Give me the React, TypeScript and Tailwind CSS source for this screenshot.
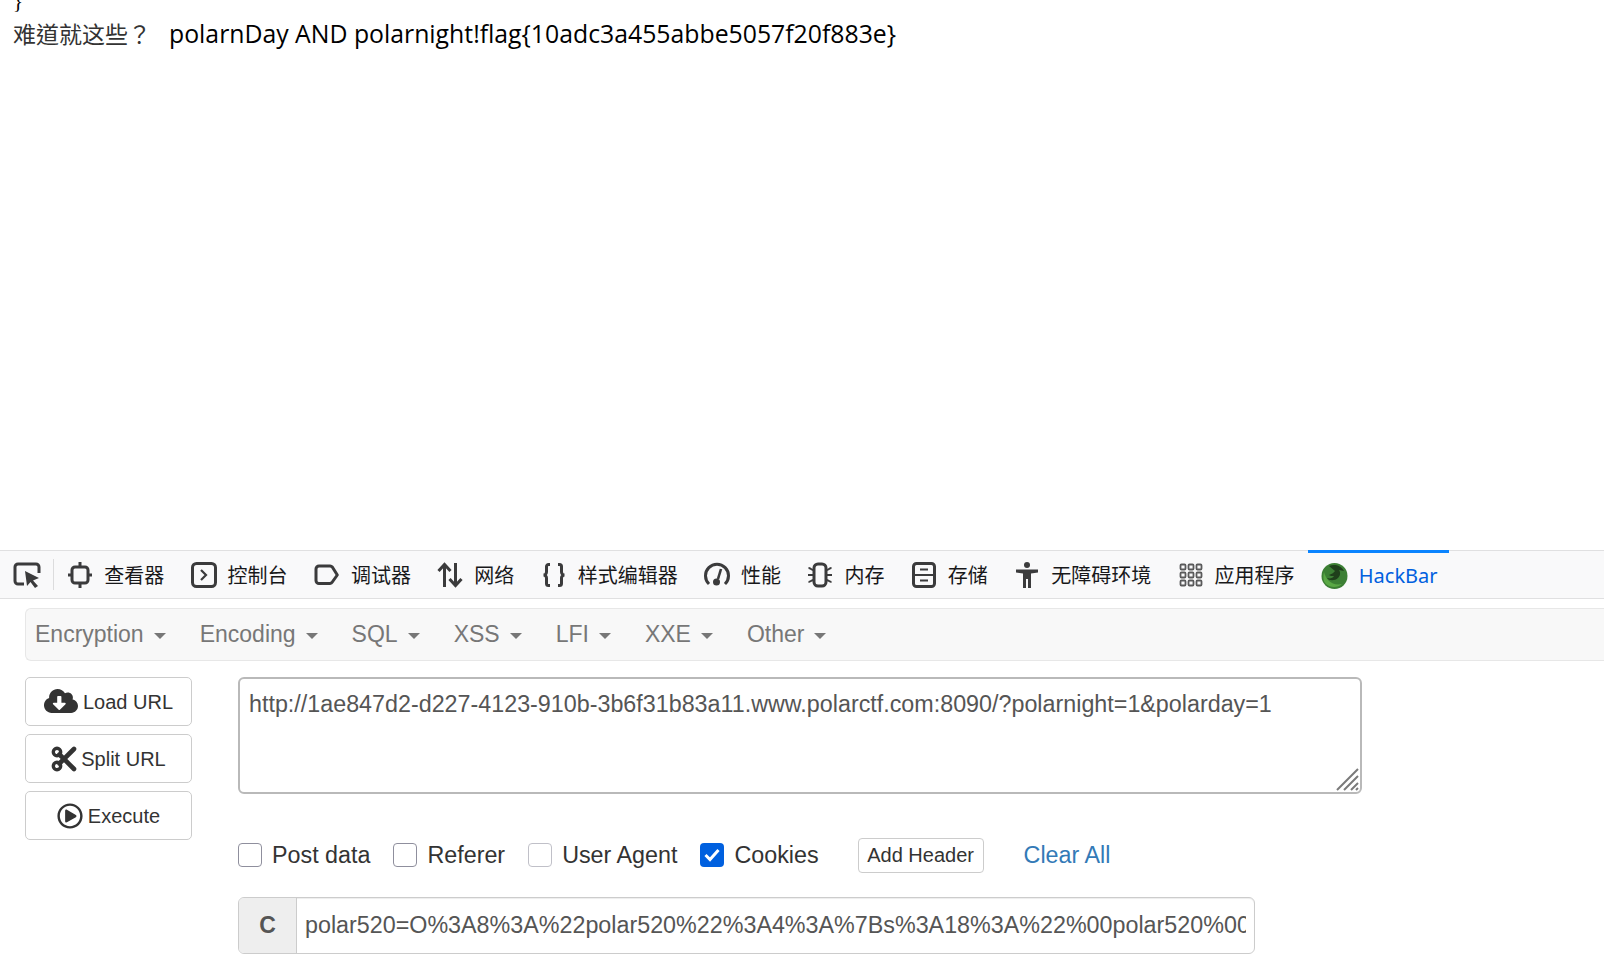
import { FaCloudDownloadAlt, FaRegPlayCircle } from "react-icons/fa";
import type { ReactNode } from "react";

const ic = "#3b3b3c";

const CursorIcon = () => (
  <svg width="28" height="26" viewBox="0 0 28 26" fill="none">
    <path d="M11 22H5a3 3 0 0 1-3-3V5a3 3 0 0 1 3-3h18a3 3 0 0 1 3 3v6" stroke={ic} strokeWidth="3" />
    <path d="M12 9l14 7-6 2.500 5 5.500-3 2-4.500-6-3.500 4z" fill={ic} />
  </svg>
);
const InspectorIcon = () => (
  <svg width="26" height="28" viewBox="0 0 26 28" fill="none" stroke={ic} strokeWidth="3">
    <rect x="5" y="6" width="16" height="16" rx="3" />
    <path d="M13 1v5M13 22v5M1 14h4M21 14h4" />
  </svg>
);
const ConsoleIcon = () => (
  <svg width="26" height="26" viewBox="0 0 26 26" fill="none" stroke={ic} strokeWidth="3">
    <rect x="1.500" y="1.500" width="23" height="23" rx="4" />
    <path d="M10 8l5 5-5 5" strokeWidth="2.200" />
  </svg>
);
const DebuggerIcon = () => (
  <svg width="26" height="24" viewBox="0 0 26 24" fill="none" stroke={ic} strokeWidth="3">
    <path d="M5 3h11a3 3 0 0 1 2.300 1l5 8-5 7a3 3 0 0 1-2.300 1.500H5a3 3 0 0 1-3-3V6a3 3 0 0 1 3-3z" strokeLinejoin="round" />
  </svg>
);
const NetworkIcon = () => (
  <svg width="26" height="26" viewBox="0 0 26 26" fill="none" stroke={ic} strokeWidth="3">
    <path d="M7.500 25V3M1.500 9l6-6.500 6 6.500M18.500 1v22M12.500 17l6 6.500 6-6.500" />
  </svg>
);
const StyleIcon = () => (
  <svg width="26" height="26" viewBox="0 0 26 26" fill="none" stroke={ic} strokeWidth="3">
    <path d="M9 2.500H7.500a2 2 0 0 0-2 2V10a3 3 0 0 1-3 3 3 3 0 0 1 3 3v5.500a2 2 0 0 0 2 2H9" />
    <path d="M17 2.500h1.500a2 2 0 0 1 2 2V10a3 3 0 0 0 3 3 3 3 0 0 0-3 3v5.500a2 2 0 0 1-2 2H17" />
  </svg>
);
const PerfIcon = () => (
  <svg width="26" height="26" viewBox="0 0 26 26" fill="none">
    <path d="M5 22a11.500 11.500 0 1 1 16 0" stroke={ic} strokeWidth="3" />
    <path d="M17 7l-3 10" stroke={ic} strokeWidth="2.600" />
    <circle cx="12.500" cy="20" r="3.500" fill={ic} />
  </svg>
);
const MemoryIcon = () => (
  <svg width="26" height="26" viewBox="0 0 26 26" fill="none" stroke={ic} strokeWidth="1.800">
    <rect x="7" y="2" width="12" height="22" rx="4" strokeWidth="3" />
    <path d="M7 8C4 8 4 6 1.500 6M7 13H1M7 18c-3 0-3 2-5.500 2M19 8c3 0 3-2 5.500-2M19 13h6M19 18c3 0 3 2 5.500 2" />
  </svg>
);
const StorageIcon = () => (
  <svg width="24" height="26" viewBox="0 0 24 26" fill="none" stroke={ic} strokeWidth="3">
    <rect x="1.500" y="1.500" width="21" height="23" rx="3" />
    <path d="M1.500 13h21M8 7.500h8M8 18.500h8" strokeWidth="2.200" />
  </svg>
);
const A11yIcon = () => (
  <svg width="24" height="28" viewBox="0 0 24 28" fill={ic}>
    <circle cx="12" cy="4" r="3" />
    <path d="M1 8.500h22v3l-7 1V27h-3v-9h-2v9H8V12.500l-7-1z" />
  </svg>
);
const AppsIcon = () => (
  <svg width="24" height="24" viewBox="0 0 24 24" fill="none" stroke="#5a5a5b" strokeWidth="1.800">
    {[2, 10, 18].flatMap((y) =>
      [2, 10, 18].map((x) => <rect key={`${x}-${y}`} x={x - 0.5} y={y - 0.5} width="5" height="5" rx="1" />),
    )}
  </svg>
);
const HackIcon = () => (
  <svg width="27" height="26" viewBox="0 0 27 26">
    <circle cx="13.500" cy="13" r="13" fill="#3c7f34" />
    <path d="M8 3c5-2 12-1 15 5l-5-1c2 3 1 6-1 8-3 3-9 3-11 0 3 1 6 0 7-2-2 0-4 0-5-1 2-1 5-2 6-4-2-2-4-3-6-5z" fill="#1f3f1b" />
    <path d="M3 9c2 8 8 14 18 12-4 4-12 4-16 0-3-3-3-8-2-12z" fill="#5aa845" />
  </svg>
);
const ScissorsIcon = () => (
  <svg width="26" height="26" viewBox="0 0 26 26" fill="none" stroke="#333">
    <circle cx="6" cy="6" r="3.700" strokeWidth="3.400" />
    <circle cx="6" cy="20" r="3.700" strokeWidth="3.400" />
    <path d="M8.500 8.500L23 23M8.500 17.500L23 3" strokeWidth="4.600" strokeLinecap="round" />
  </svg>
);

const tabs: [ReactNode, string][] = [
  [<InspectorIcon />, "查看器"],
  [<ConsoleIcon />, "控制台"],
  [<DebuggerIcon />, "调试器"],
  [<NetworkIcon />, "网络"],
  [<StyleIcon />, "样式编辑器"],
  [<PerfIcon />, "性能"],
  [<MemoryIcon />, "内存"],
  [<StorageIcon />, "存储"],
  [<A11yIcon />, "无障碍环境"],
  [<AppsIcon />, "应用程序"],
];

const Check = ({ label, on, light }: { label: string; on?: boolean; light?: boolean }) => (
  <label className="flex items-center gap-[10px] text-[23.3px] text-[#333]">
    {on ? (
      <span className="flex h-[24px] w-[24px] items-center justify-center rounded-[4px] bg-[#0060df]">
        <svg width="16" height="14" viewBox="0 0 16 14" fill="none" stroke="white" strokeWidth="3">
          <path d="M1.500 7l4.500 4.500L14.500 2" />
        </svg>
      </span>
    ) : (
      <span className={`h-[24px] w-[24px] rounded-[4px] border ${light ? "border-[#c0c0c8]" : "border-[#8f8f9d]"} bg-white`} />
    )}
    {label}
  </label>
);

export default function App() {
  return (
    <div className="h-[969px] overflow-hidden bg-white font-['Liberation_Sans',sans-serif]">
      <main className="h-[550px] overflow-hidden pl-[13px] text-black">
        <p className="-mt-[12px] h-[26px] text-[21px] leading-[26px] font-['Liberation_Serif',serif]">{"}"}</p>
        <p className="mt-[2px] flex items-center whitespace-nowrap">
          <span className="w-[156px] text-[23px] leading-[34px] text-[#333] font-['Noto_Sans_CJK_TC','Noto_Sans_CJK_SC',serif]">难道就这些？</span>
          <span className="text-[24.8px] leading-[34px] font-['Open_Sans',sans-serif]">polarnDay AND polarnight!flag{"{10adc3a455abbe5057f20f883e}"}</span>
        </p>
      </main>

      <nav className="flex h-[49px] items-stretch border-y border-[#e0e0e1] bg-[#f9f9fa] font-['Noto_Sans_CJK_SC',sans-serif] text-[20px] text-[#18181a]">
        <div className="flex w-[53px] items-center justify-center"><CursorIcon /></div>
        <div className="my-[8px] w-px bg-[#dcdcdd]" />
        <div className="flex">
          {tabs.map(([icon, name]) => (
            <div key={name} className="flex items-center gap-[11px] px-[13.2px]">
              <span className="flex w-[26px] justify-center">{icon}</span>
              <span>{name}</span>
            </div>
          ))}
        </div>
        <div className="-mt-[1px] flex w-[141px] items-center gap-[11px] border-t-[3px] border-[#0a84ff] pl-[13px] text-[20px] text-[#0060df] font-['Noto_Sans',sans-serif]">
          <HackIcon />
          <span>HackBar</span>
        </div>
      </nav>

      <section className="pl-[25px] pt-[9px]">
        <div className="flex h-[53px] items-center gap-[34px] rounded-l-[6px] border border-r-0 border-[#e7e7e7] bg-[#f8f8f8] pl-[9px] text-[23px] text-[#777]">
          {["Encryption", "Encoding", "SQL", "XSS", "LFI", "XXE", "Other"].map((m) => (
            <span key={m} className="flex items-center gap-[10px]">
              {m}
              <span className="mt-[3px] h-0 w-0 border-x-[6px] border-t-[6px] border-x-transparent border-t-[#777]" />
            </span>
          ))}
        </div>

        <div className="mt-[16px] flex">
          <aside className="flex w-[167px] flex-col gap-[8px] text-[20px] text-[#333]">
            <button className="flex h-[49px] items-center justify-center gap-[5px] rounded-[5px] border border-[#ccc]">
              <FaCloudDownloadAlt className="-mt-[2px] text-[34px] text-[#333]" /> Load URL
            </button>
            <button className="flex h-[49px] items-center justify-center gap-[4px] rounded-[5px] border border-[#ccc]">
              <ScissorsIcon /> Split URL
            </button>
            <button className="flex h-[49px] items-center justify-center gap-[5px] rounded-[5px] border border-[#ccc]">
              <FaRegPlayCircle className="text-[26px] text-[#333]" /> Execute
            </button>
          </aside>

          <div className="ml-[46px] w-[1124px]">
            <div className="relative h-[117px]">
              <textarea
                readOnly
                className="h-full w-full resize-none rounded-[6px] border-2 border-[#b9b9b9] px-[9px] pt-[10px] pb-[8px] text-[23.3px] leading-[30px] text-[#555] outline-none"
                defaultValue="http://1ae847d2-d227-4123-910b-3b6f31b83a11.www.polarctf.com:8090/?polarnight=1&polarday=1"
              />
              <svg className="absolute bottom-[3px] right-[3px]" width="23" height="23" viewBox="0 0 23 23" fill="none" stroke="#7a7a7a" strokeWidth="2">
                <path d="M1 22L22 1M8 22L22 8M15 22l7-7M20 22l2-2" />
              </svg>
            </div>

            <div className="mt-[43px] flex h-[36px] items-center">
              <div className="flex gap-[23px]">
                <Check label="Post data" />
                <Check label="Referer" />
                <Check label="User Agent" light />
                <Check label="Cookies" on />
              </div>
              <button className="ml-[39px] h-[35px] w-[126px] rounded-[4px] border border-[#ccc] text-[20px] text-[#333]">Add Header</button>
              <a className="ml-[40px] text-[23.3px] text-[#337ab7]">Clear All</a>
            </div>

            <div className="mt-[24px] flex h-[57px] w-[1017px] overflow-hidden rounded-[6px] border border-[#ccc] shadow-[inset_0_1px_1px_rgba(0,0,0,0.075)]">
              <span className="flex w-[58px] items-center justify-center border-r border-[#ccc] bg-[#eee] text-[23px] font-bold text-[#555]">C</span>
              <input
                readOnly
                className="min-w-0 flex-1 px-[8px] text-[23.3px] text-[#555] outline-none"
                defaultValue="polar520=O%3A8%3A%22polar520%22%3A4%3A%7Bs%3A18%3A%22%00polar520%00flag%22%3Bs%3A0%3A%22%22%3B%7D"
              />
            </div>
          </div>
        </div>
      </section>
    </div>
  );
}
